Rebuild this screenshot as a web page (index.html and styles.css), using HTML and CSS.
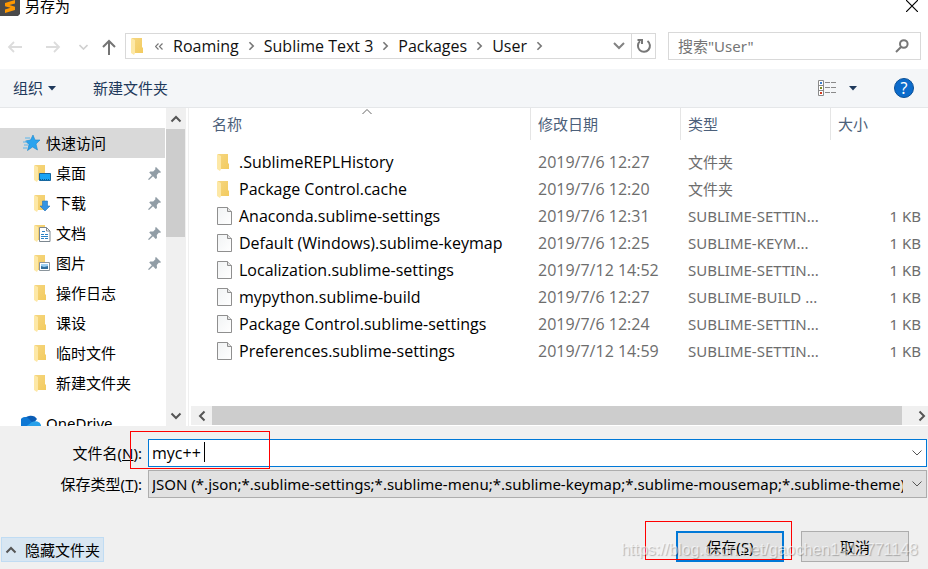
FILE: index.html
```
<!DOCTYPE html>
<html lang="zh-CN">
  <head>
    <meta charset="UTF-8" />
    <meta name="viewport" content="width=device-width, initial-scale=1.0" />
    <title>另存为</title>
    <link rel="stylesheet" href="styles.css">
  </head>
  <body>
    <!-- shared icons -->
    <svg class="defs" width="0" height="0">
      <defs>
        <linearGradient id="fold" x1="0" y1="0" x2="1" y2="1">
          <stop offset="0" stop-color="#f5d680" />
          <stop offset="1" stop-color="#f3cb5f" />
        </linearGradient>
        <linearGradient id="paper" x1="0" y1="0" x2="1" y2="1">
          <stop offset="0" stop-color="#f1f3f4" />
          <stop offset="1" stop-color="#ffffff" />
        </linearGradient>
      </defs>
      <symbol id="folder" viewBox="0 0 16 18">
        <path d="M1 1h10v9l1 1v5H1z" fill="url(#fold)" />
        <path d="M0 1l4 2v13l-1 2-3-2z" fill="#fde8a6" />
      </symbol>
      <symbol id="file" viewBox="0 0 16 18">
        <path d="M.5.5h10l4 4v13H.5z" fill="url(#paper)" stroke="#8f8f8f" />
        <path d="M10.500.5v4h4" fill="#e4e4e4" stroke="#8f8f8f" />
      </symbol>
      <symbol id="pin" viewBox="0 0 13 13">
        <path d="M8 0l5 5-1 1-1-.4-2.200 2.400.2 3-1.300 1L5 9.300 1 13 0 12.300 3.800 8.200 1.200 5.500l1-1 3 .1L7.600 2 7 1z" fill="#919da6" />
      </symbol>
      <symbol id="up" viewBox="0 0 12 8">
        <path d="M1.500 6.500L6 2l4.500 4.500" fill="none" stroke="#555" stroke-width="2" />
      </symbol>
      <symbol id="down" viewBox="0 0 12 8">
        <path d="M1.500 1.500L6 6l4.500-4.500" fill="none" stroke="#555" stroke-width="2" />
      </symbol>
      <symbol id="left" viewBox="0 0 8 12">
        <path d="M6.500 1.500L2 6l4.500 4.500" fill="none" stroke="#555" stroke-width="2" />
      </symbol>
      <symbol id="right" viewBox="0 0 8 12">
        <path d="M1.500 1.500L6 6l-4.500 4.500" fill="none" stroke="currentColor" stroke-width="2" />
      </symbol>
      <symbol id="thin-down" viewBox="0 0 10 6">
        <path d="M.5.5L5 5 9.500.5" fill="none" stroke="#555" />
      </symbol>
    </svg>

    <div class="dialog">
      <header class="titlebar">
        <svg class="logo" width="20" height="20" viewBox="0 0 20 20">
          <path d="M0 0h20v18l-2 2H0z" fill="#4a4a4a" />
          <path d="M5 7l10-3v3.500L9.500 9 15 10.800v3.200L5 17v-3.500l5.500-1.700L5 10.200z" fill="#ff9800" />
        </svg>
        <h1>另存为</h1>
        <button class="close" type="button" aria-label="关闭">
          <svg width="12" height="12" viewBox="0 0 12 12">
            <path d="M0 0l12 12M12 0L0 12" stroke="#000" stroke-width="1.200" />
          </svg>
        </button>
      </header>

      <nav class="navbar">
        <div class="history">
          <button type="button" aria-label="后退">
            <svg width="15" height="12" viewBox="0 0 15 12"><path d="M15 6H1.500M7 1L2 6l5 5" fill="none" stroke="#dcdcdc" stroke-width="1.800" /></svg>
          </button>
          <button type="button" aria-label="前进">
            <svg width="15" height="12" viewBox="0 0 15 12"><path d="M0 6h13.500M8 1l5 5-5 5" fill="none" stroke="#dcdcdc" stroke-width="1.800" /></svg>
          </button>
          <button type="button" aria-label="最近">
            <svg width="9" height="6" viewBox="0 0 9 6"><path d="M.5 1l4 4 4-4" fill="none" stroke="#d0d0d0" stroke-width="1.600" /></svg>
          </button>
          <button type="button" aria-label="向上">
            <svg width="14" height="16" viewBox="0 0 14 16"><path d="M7 16V2M1 8l6-6 6 6" fill="none" stroke="#747474" stroke-width="2" /></svg>
          </button>
        </div>
        <div class="address">
          <svg width="16" height="18"><use href="#folder" /></svg>
          <svg class="more" width="8" height="7" viewBox="0 0 8 7"><path d="M3.500.5l-3 3 3 3M7.500.5l-3 3 3 3" fill="none" stroke="#777" stroke-width="1.200" /></svg>
          <a href="#">Roaming</a>
          <svg class="sep" width="7" height="10"><use href="#right" /></svg>
          <a href="#">Sublime Text 3</a>
          <svg class="sep" width="7" height="10"><use href="#right" /></svg>
          <a href="#">Packages</a>
          <svg class="sep" width="7" height="10"><use href="#right" /></svg>
          <a href="#">User</a>
          <svg class="sep" width="7" height="10"><use href="#right" /></svg>
          <button class="drop" type="button" aria-label="以前的位置">
            <svg width="12" height="8" viewBox="0 0 12 8"><path d="M1 1l5 5 5-5" fill="none" stroke="#828282" stroke-width="2" /></svg>
          </button>
          <button class="refresh" type="button" aria-label="刷新">
            <svg width="16" height="16" viewBox="0 0 16 16">
              <path d="M11.500 3A6 6 0 1 1 4 3.300" fill="none" stroke="#777" stroke-width="2" />
              <path d="M1.500 2H6V6" fill="none" stroke="#777" stroke-width="2" />
            </svg>
          </button>
        </div>
        <label class="search">
          <input type="text" placeholder="搜索&quot;User&quot;" aria-label="搜索" />
          <svg width="14" height="14" viewBox="0 0 14 14">
            <circle cx="8.800" cy="5" r="3.800" fill="none" stroke="#777" stroke-width="2" />
            <path d="M6 8L1 13" stroke="#777" stroke-width="2" />
          </svg>
        </label>
      </nav>

      <div class="toolbar">
        <button class="organize" type="button">组织
          <svg width="8" height="5" viewBox="0 0 8 5"><path d="M0 0h8L4 4.500z" fill="#1e395b" /></svg>
        </button>
        <button type="button">新建文件夹</button>
        <button class="view" type="button" aria-label="更改视图">
          <svg width="18" height="16" viewBox="0 0 18 16">
            <path d="M.5.5h5v15h-5zM.5 5.500h5M.5 10.500h5" fill="#fff" stroke="#8a8a8a" />
            <path d="M2 2h2v2H2z" fill="#3c7fd0" />
            <path d="M2 7h2v2H2z" fill="#7d8b22" />
            <path d="M2 12h2v2H2z" fill="#d13a1e" />
            <path d="M7 2.500h5M13 2.500h5M7 7.500h5M13 7.500h5M7 12.500h5M13 12.500h5" stroke="#8a8a8a" />
          </svg>
          <svg width="8" height="5" viewBox="0 0 8 5"><path d="M0 0h8L4 4.500z" fill="#1e395b" /></svg>
        </button>
        <button class="help" type="button" aria-label="帮助">?</button>
      </div>

      <div class="content">
        <aside class="sidebar">
          <ul class="tree">
            <li class="root selected">
              <svg width="18" height="16" viewBox="0 0 18 16">
                <path d="M10 0l2 5h5l-4 4 1.500 6L9.500 12 4.500 15.500l1.500-6L2.500 6l5-1z" fill="#2aa3ee" stroke="#1c86cc" stroke-width=".6" />
                <path d="M2 3h5M0 7h4M1 10h4M0 13h4" stroke="#5bb5ec" />
              </svg>
              快速访问
            </li>
            <li>
              <svg width="17" height="18" viewBox="0 0 17 18">
                <use href="#folder" width="16" height="18" />
                <path d="M5.500 9.500h11v7h-11z" fill="#18a4f5" stroke="#1667a0" /><path d="M6 15.500h10" stroke="#0b5c91" stroke-dasharray="1 1" />
              </svg>
              桌面
              <svg class="pin" width="13" height="13"><use href="#pin" /></svg>
            </li>
            <li>
              <svg width="17" height="18" viewBox="0 0 17 18">
                <use href="#folder" width="16" height="18" />
                <path d="M8.500 7h5v5H16l-5 5-5-5h2.500z" fill="#3494e3" stroke="#2474b8" stroke-width=".6" />
              </svg>
              下载
              <svg class="pin" width="13" height="13"><use href="#pin" /></svg>
            </li>
            <li>
              <svg width="17" height="18" viewBox="0 0 17 18">
                <use href="#folder" width="16" height="18" />
                <path d="M5.500 3.500h7l3.500 3.500v10.500H5.500z" fill="#fff" stroke="#7c8790" /><path d="M12.500 3.500V7H16" fill="none" stroke="#7c8790" />
                <path d="M11 7.500H8M7 10.500h3M11 10.500h3M7 12.500h7M7 14.500h3M11 14.500h3" stroke="#2d83c5" />
              </svg>
              文档
              <svg class="pin" width="13" height="13"><use href="#pin" /></svg>
            </li>
            <li>
              <svg width="17" height="18" viewBox="0 0 17 18">
                <use href="#folder" width="16" height="18" />
                <path d="M5.500 8.500h10v8h-10z" fill="#fff" stroke="#8b959c" /><path d="M7 10h7v3H7z" fill="#9ed0f2" /><path d="M7 12l3 1 4-1v3H7z" fill="#316f9c" />
              </svg>
              图片
              <svg class="pin" width="13" height="13"><use href="#pin" /></svg>
            </li>
            <li><svg width="17" height="18"><use href="#folder" width="16" height="18" /></svg>操作日志</li>
            <li><svg width="17" height="18"><use href="#folder" width="16" height="18" /></svg>课设</li>
            <li><svg width="17" height="18"><use href="#folder" width="16" height="18" /></svg>临时文件</li>
            <li><svg width="17" height="18"><use href="#folder" width="16" height="18" /></svg>新建文件夹</li>
            <li class="root drive">
              <svg width="20" height="18" viewBox="0 0 20 18">
                <path d="M3 6a7 6 0 0 1 13-1l-4 5z" fill="#0a5cb5" />
                <path d="M0 11a5 5 0 0 1 8-6l5 5-3 6H3a4 4 0 0 1-3-5z" fill="#0f78d4" />
                <path d="M3 14l8-6a6 5 0 0 1 9 3 4 4 0 0 1-4 5H5z" fill="#28a0ea" />
              </svg>
              OneDrive
            </li>
          </ul>
          <div class="vscroll">
            <button type="button" aria-label="向上滚动"><svg width="12" height="8"><use href="#up" /></svg></button>
            <div class="thumb"></div>
            <button type="button" aria-label="向下滚动"><svg width="12" height="8"><use href="#down" /></svg></button>
          </div>
        </aside>

        <main class="files">
          <svg class="sort" width="10" height="6" viewBox="0 0 10 6"><path d="M.5 5L5 .5 9.500 5" fill="none" stroke="#666" /></svg>
          <table>
            <thead>
              <tr>
                <th class="name">名称</th>
                <th class="date">修改日期</th>
                <th class="type">类型</th>
                <th class="size">大小</th>
              </tr>
            </thead>
            <tbody>
              <tr>
                <td><svg width="16" height="18"><use href="#folder" /></svg>.SublimeREPLHistory</td>
                <td>2019/7/6 12:27</td>
                <td>文件夹</td>
                <td></td>
              </tr>
              <tr>
                <td><svg width="16" height="18"><use href="#folder" /></svg>Package Control.cache</td>
                <td>2019/7/6 12:20</td>
                <td>文件夹</td>
                <td></td>
              </tr>
              <tr>
                <td><svg width="16" height="18"><use href="#file" /></svg>Anaconda.sublime-settings</td>
                <td>2019/7/6 12:31</td>
                <td>SUBLIME-SETTIN...</td>
                <td>1 KB</td>
              </tr>
              <tr>
                <td><svg width="16" height="18"><use href="#file" /></svg>Default (Windows).sublime-keymap</td>
                <td>2019/7/6 12:25</td>
                <td>SUBLIME-KEYM...</td>
                <td>1 KB</td>
              </tr>
              <tr>
                <td><svg width="16" height="18"><use href="#file" /></svg>Localization.sublime-settings</td>
                <td>2019/7/12 14:52</td>
                <td>SUBLIME-SETTIN...</td>
                <td>1 KB</td>
              </tr>
              <tr>
                <td><svg width="16" height="18"><use href="#file" /></svg>mypython.sublime-build</td>
                <td>2019/7/6 12:27</td>
                <td>SUBLIME-BUILD ...</td>
                <td>1 KB</td>
              </tr>
              <tr>
                <td><svg width="16" height="18"><use href="#file" /></svg>Package Control.sublime-settings</td>
                <td>2019/7/6 12:24</td>
                <td>SUBLIME-SETTIN...</td>
                <td>1 KB</td>
              </tr>
              <tr>
                <td><svg width="16" height="18"><use href="#file" /></svg>Preferences.sublime-settings</td>
                <td>2019/7/12 14:59</td>
                <td>SUBLIME-SETTIN...</td>
                <td>1 KB</td>
              </tr>
            </tbody>
          </table>
          <div class="hscroll">
            <button type="button" aria-label="向左滚动"><svg width="8" height="12"><use href="#left" /></svg></button>
            <div class="thumb"></div>
            <button type="button" aria-label="向右滚动"><svg width="8" height="12"><use href="#right" /></svg></button>
          </div>
        </main>
      </div>

      <form class="bottom">
        <div class="fields">
          <label for="filename">文件名(<u>N</u>):</label>
          <div class="field">
            <input type="text" id="filename" value="myc++" />
            <span class="caret"></span>
            <svg class="arrow" width="10" height="6"><use href="#thin-down" /></svg>
            <span class="mark mark-name"></span>
          </div>
          <label for="filetype">保存类型(<u>T</u>):</label>
          <div class="field">
            <select id="filetype">
              <option>JSON (*.json;*.sublime-settings;*.sublime-menu;*.sublime-keymap;*.sublime-mousemap;*.sublime-theme)</option>
            </select>
            <svg class="arrow" width="10" height="6"><use href="#thin-down" /></svg>
          </div>
        </div>
        <div class="actions">
          <button class="hide" type="button"><svg width="12" height="8"><use href="#up" /></svg>隐藏文件夹</button>
          <div class="save-wrap">
            <button class="btn save" type="submit">保存(<u>S</u>)</button>
            <span class="mark mark-save"></span>
          </div>
          <button class="btn" type="button">取消</button>
          <span class="watermark">https://blog.csdn.net/gaochen1412771148</span>
        </div>
      </form>
    </div>
  </body>
</html>
```

FILE: styles.css
```
* {
  box-sizing: border-box;
}
body {
  margin: 0;
  font-family: "Noto Sans", "Noto Sans CJK SC", sans-serif;
  font-size: 15px;
  line-height: 20px;
  color: #000;
  background-color: #fff;
}
button,
input,
select {
  font: inherit;
  color: inherit;
}
button {
  display: flex;
  align-items: center;
  justify-content: center;
  padding: 0;
  border: none;
  background: none;
}
svg {
  display: block;
  flex-shrink: 0;
}
.defs {
  position: absolute;
}
.dialog {
  display: flex;
  flex-direction: column;
  height: 100vh;
  overflow: hidden;
}

/* title */
.titlebar {
  display: flex;
  align-items: flex-start;
  height: 32px;
  padding-right: 10px;
}
.logo {
  margin-top: -4px;
}
.titlebar h1 {
  margin: -4px 0 0 5px;
  font-size: 15px;
  font-weight: normal;
}
.close {
  margin-left: auto;
}

/* address row */
.navbar {
  display: flex;
  align-items: flex-start;
  height: 37px;
  padding-right: 7px;
}
.history {
  display: flex;
  align-items: center;
  width: 125px;
  height: 30px;
  padding-left: 7px;
}
.history button:nth-child(2) {
  margin-left: 24px;
}
.history button:nth-child(3) {
  margin-left: 18px;
}
.history button:nth-child(4) {
  margin-left: 14px;
}
.address {
  display: flex;
  align-items: center;
  flex: 1;
  height: 26px;
  margin-top: 1px;
  padding-left: 5px;
  border: 1px solid #d9d9d9;
}
.address a {
  color: #111;
  text-decoration: none;
}
.address a,
.field input,
td:first-child,
td:nth-child(2) {
  font-family: "Open Sans", "Noto Sans CJK SC", sans-serif;
  font-size: 16px;
}
.more {
  margin: 0 10px 0 8px;
}
.sep {
  margin: 0 9px;
  color: #777;
}
.drop {
  margin-left: auto;
  width: 24px;
}
.refresh {
  width: 24px;
  height: 24px;
  border-left: 1px solid #d9d9d9;
}
.search {
  display: flex;
  align-items: center;
  width: 253px;
  height: 28px;
  margin-left: 12px;
  padding: 0 11px 0 9px;
  border: 1px solid #d9d9d9;
}
.search input {
  flex: 1;
  min-width: 0;
  padding: 0;
  border: none;
  outline: none;
}
.search input::placeholder {
  color: #757575;
}

/* toolbar */
.toolbar {
  display: flex;
  align-items: center;
  height: 39px;
  padding: 0 14px 0 13px;
  gap: 37px;
  color: #1e395b;
  background-color: #f4f6f8;
  border-bottom: 1px solid #e5e7e9;
}
.organize {
  gap: 5px;
}
.view {
  margin-left: auto;
  gap: 13px;
}
.help {
  width: 20px;
  height: 20px;
  font-size: 16px;
  color: #fff;
  background-color: #0b6bcb;
  border: 1px solid #0a4f96;
  border-radius: 50%;
}

/* folders and files */
.content {
  display: flex;
  flex: 1;
  min-height: 0;
}
.sidebar {
  display: flex;
  width: 189px;
  padding-right: 2px;
  border-right: 1px solid #efefef;
  overflow: hidden;
}
.tree {
  flex: 1;
  margin: 0;
  padding: 20px 0 0;
  list-style: none;
}
.tree li {
  display: flex;
  align-items: center;
  gap: 5px;
  height: 30px;
  margin-right: 1px;
  padding: 0 4px 0 34px;
}
.tree .root {
  padding-left: 23px;
}
.tree .selected {
  background-color: #d9d9d9;
}
.tree .drive {
  margin-top: 10px;
  padding-left: 21px;
}
.pin {
  margin-left: auto;
}
.vscroll {
  display: flex;
  flex-direction: column;
  width: 20px;
  background-color: #f0f0f0;
}
.vscroll button {
  height: 21px;
  margin-right: 1px;
}
.vscroll button:last-child {
  margin-top: auto;
}
.thumb {
  background-color: #cdcdcd;
}
.vscroll .thumb {
  height: 108px;
  margin-right: 1px;
}
.files {
  position: relative;
  display: flex;
  flex-direction: column;
  flex: 1;
  min-width: 0;
}
.sort {
  position: absolute;
  top: 1px;
  left: 173px;
}
table {
  width: 100%;
  table-layout: fixed;
  border-collapse: separate;
  border-spacing: 0;
}
th {
  height: 32px;
  padding: 0 0 0 7px;
  font-weight: normal;
  text-align: left;
  color: #4c607a;
  border-right: 1px solid #e5e5e5;
}
th.name {
  padding-left: 23px;
}
th.date,
th.type {
  width: 150px;
}
th.size {
  width: 97px;
  border-right: none;
}
tbody::before {
  content: "";
  display: block;
  height: 8px;
}
td {
  height: 27px;
  padding: 0 0 0 7px;
  color: #6d6d6d;
  white-space: nowrap;
}
td:first-child {
  display: flex;
  align-items: center;
  gap: 6px;
  padding-left: 28px;
  color: #000;
}
td:last-child {
  padding-right: 7px;
  text-align: right;
}
.hscroll {
  display: flex;
  height: 19px;
  margin: auto 0 1px 2px;
  color: #555;
  background-color: #f0f0f0;
}
.hscroll button {
  width: 21px;
}
.hscroll .thumb {
  flex: 1;
}
.hscroll button:last-child {
  width: 26px;
  padding-left: 14px;
}

/* name, type and buttons */
.bottom {
  background-color: #f0f0f0;
}
.fields {
  display: grid;
  grid-template-columns: 142px 1fr;
  column-gap: 6px;
  row-gap: 3px;
  align-items: center;
  padding: 13px 1px 0 0;
}
.fields label {
  text-align: right;
}
.field {
  position: relative;
  min-width: 0;
}
.field input,
.field select {
  display: block;
  width: 100%;
  height: 28px;
  padding: 0 23px 0 3px;
  border: 1px solid #0078d7;
  border-radius: 0;
  outline: none;
  background-color: #fff;
}
.field select {
  appearance: none;
  border-color: #adadad;
  background-color: #e1e1e1;
  text-overflow: clip;
}
.arrow {
  position: absolute;
  top: 11px;
  right: 5px;
}
.caret {
  position: absolute;
  top: 3px;
  left: 56px;
  width: 1px;
  height: 20px;
  background-color: #000;
}
/* red frames round the name and the save button */
.mark {
  position: absolute;
  border: 1px solid #f00;
  pointer-events: none;
}
.mark-name {
  top: -8px;
  left: -18px;
  width: 140px;
  height: 38px;
}
.mark-save {
  top: -10px;
  left: -31px;
  width: 147px;
  height: 39px;
}
.actions {
  position: relative;
  display: flex;
  align-items: flex-end;
  padding: 33px 19px 7px 1px;
}
.hide {
  gap: 8px;
  width: 103px;
  height: 25px;
  border: 1px solid #c0dcf3;
  background-color: #d8e6f2;
}
.save-wrap {
  position: relative;
  margin: 0 17px 0 auto;
}
.btn {
  width: 108px;
  height: 31px;
  border: 1px solid #adadad;
  background-color: #e1e1e1;
}
.save {
  border: 2px solid #0078d7;
}
.watermark {
  position: absolute;
  right: 10px;
  bottom: 9px;
  font-family: "Liberation Sans", Arial, sans-serif;
  font-size: 16px;
  color: rgba(255, 255, 255, 0.6);
  text-shadow: 1px 1px 1px rgba(0, 0, 0, 0.25);
  pointer-events: none;
}
```
